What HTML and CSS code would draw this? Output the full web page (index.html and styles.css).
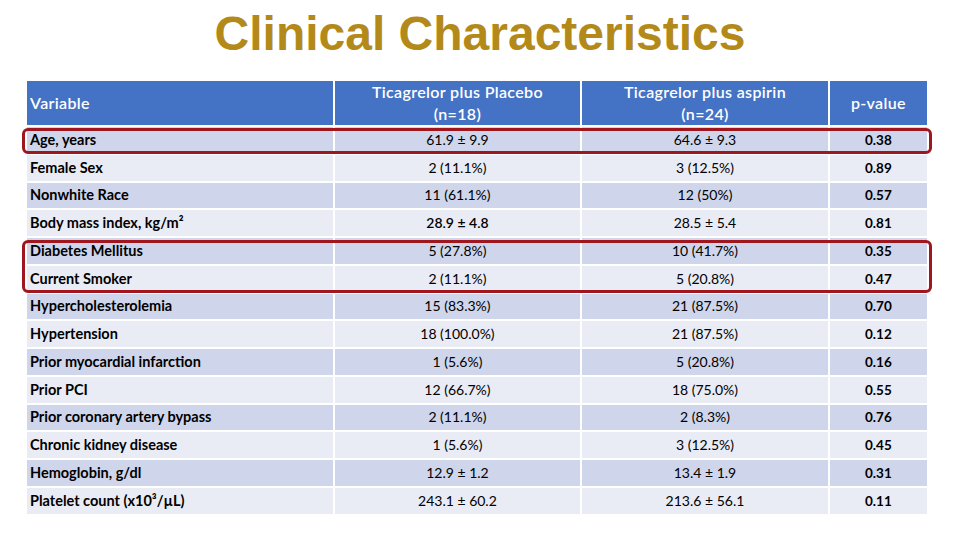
FILE: index.html
```html
<!DOCTYPE html>
<html lang="en">
<head>
<meta charset="utf-8">
<title>Clinical Characteristics</title>
<link rel="stylesheet" href="styles.css">
</head>
<body>
<h1 class="title">Clinical Characteristics</h1>
<div class="sheet">
  <table class="chars">
    <colgroup>
      <col class="c-var"><col class="c-grp"><col class="c-grp"><col class="c-p">
    </colgroup>
    <thead>
      <tr>
        <th class="var">Variable</th>
        <th>Ticagrelor plus Placebo<br>(n=18)</th>
        <th>Ticagrelor plus aspirin<br>(n=24)</th>
        <th>p-value</th>
      </tr>
    </thead>
    <tbody>
      <tr><td class="var">Age, years</td><td>61.9 ± 9.9</td><td>64.6 ± 9.3</td><td class="p">0.38</td></tr>
      <tr><td class="var">Female Sex</td><td>2 (11.1%)</td><td>3 (12.5%)</td><td class="p">0.89</td></tr>
      <tr><td class="var">Nonwhite Race</td><td>11 (61.1%)</td><td>12 (50%)</td><td class="p">0.57</td></tr>
      <tr><td class="var">Body mass index, kg/m²</td><td class="semi">28.9 ± 4.8</td><td>28.5 ± 5.4</td><td class="p">0.81</td></tr>
      <tr><td class="var">Diabetes Mellitus</td><td>5 (27.8%)</td><td>10 (41.7%)</td><td class="p">0.35</td></tr>
      <tr><td class="var">Current Smoker</td><td>2 (11.1%)</td><td>5 (20.8%)</td><td class="p">0.47</td></tr>
      <tr><td class="var">Hypercholesterolemia</td><td>15 (83.3%)</td><td>21 (87.5%)</td><td class="p">0.70</td></tr>
      <tr><td class="var">Hypertension</td><td>18 (100.0%)</td><td>21 (87.5%)</td><td class="p">0.12</td></tr>
      <tr><td class="var">Prior myocardial infarction</td><td>1 (5.6%)</td><td>5 (20.8%)</td><td class="p">0.16</td></tr>
      <tr><td class="var">Prior PCI</td><td>12 (66.7%)</td><td>18 (75.0%)</td><td class="p">0.55</td></tr>
      <tr><td class="var">Prior coronary artery bypass</td><td>2 (11.1%)</td><td>2 (8.3%)</td><td class="p">0.76</td></tr>
      <tr><td class="var">Chronic kidney disease</td><td>1 (5.6%)</td><td>3 (12.5%)</td><td class="p">0.45</td></tr>
      <tr><td class="var">Hemoglobin, g/dl</td><td>12.9 ± 1.2</td><td>13.4 ± 1.9</td><td class="p">0.31</td></tr>
      <tr><td class="var">Platelet count (x10³/µL)</td><td>243.1 ± 60.2</td><td>213.6 ± 56.1</td><td class="p">0.11</td></tr>
    </tbody>
  </table>
  <div class="highlight h-age"></div>
  <div class="highlight h-dm"></div>
</div>
</body>
</html>
```

FILE: styles.css
```css
html, body {
  margin: 0;
  padding: 0;
  background: #ffffff;
}

body {
  width: 960px;
  height: 540px;
  overflow: hidden;
  font-family: Lato, "Open Sans", sans-serif;
  color: #000000;
}

.title {
  margin: 10px 0 0 0;
  height: 48px;
  line-height: 48px;
  text-align: center;
  font-family: "Liberation Sans", Arial, sans-serif;
  font-weight: bold;
  font-size: 48px;
  color: #b38a1a;
}

.sheet {
  position: relative;
  margin: 21px 0 0 25px;
  width: 904px;
}

.chars {
  border-collapse: separate;
  border-spacing: 2px;
  width: 904px;
  table-layout: fixed;
  font-size: 14px;
}

.c-var { width: 305px; }
.c-grp { width: 245px; }
.c-p { width: 97px; }

.chars th {
  background: #4472c4;
  color: #ffffff;
  font-weight: 600;
  font-size: 16px;
  letter-spacing: 0.35px;
  height: 44px;
  line-height: 22px;
  padding: 0;
  text-align: center;
  vertical-align: middle;
}

.chars th.var {
  text-align: left;
  padding-left: 3px;
}

.chars td {
  height: 25.75px;
  padding: 0;
  text-align: center;
  vertical-align: middle;
  line-height: 16px;
}

.chars tbody tr:nth-child(odd) td { background: #cfd5ea; }
.chars tbody tr:nth-child(even) td { background: #e9ebf5; }

.chars td.var {
  text-align: left;
  padding-left: 3px;
  font-weight: bold;
  font-size: 14.5px;
}

.chars td.p {
  font-weight: bold;
  font-size: 13.5px;
}

.chars td.semi { font-weight: 600; }

.highlight {
  position: absolute;
  left: -3px;
  width: 904px;
  border: 3px solid #a0161e;
  border-radius: 6px;
  pointer-events: none;
}

.h-age { top: 49px; height: 20px; }
.h-dm { top: 161px; height: 47px; }
```
